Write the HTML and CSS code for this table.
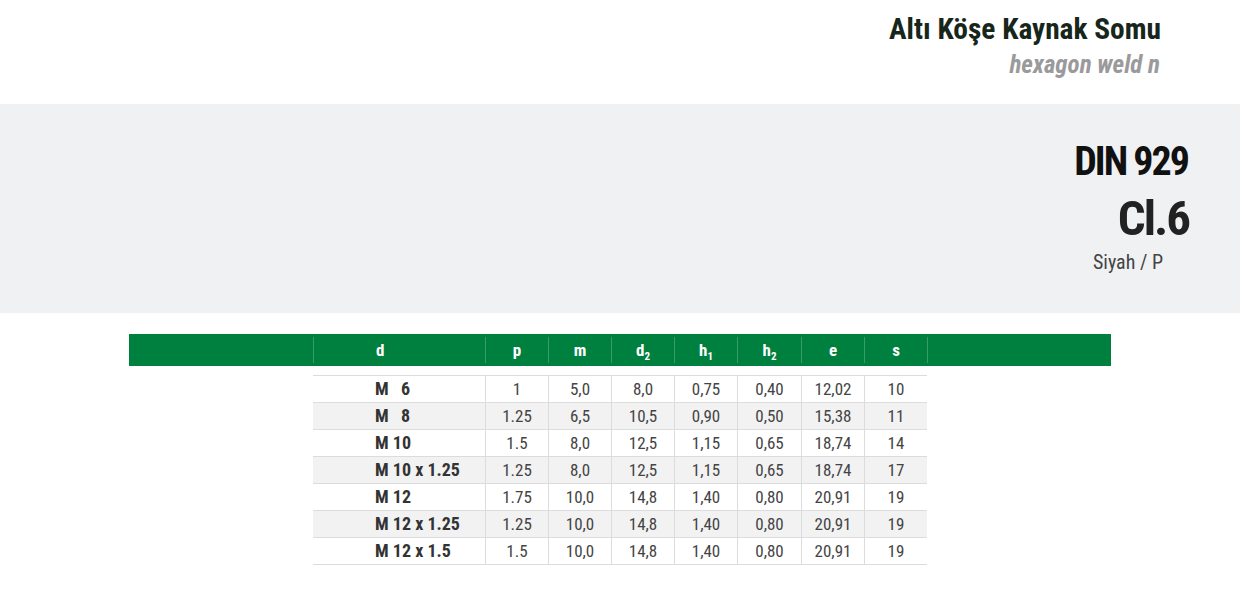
FILE: index.html
```html
<!DOCTYPE html>
<html lang="tr">
<head>
<meta charset="utf-8">
<title>Altı Köşe Kaynak Somu</title>
<link rel="stylesheet" href="styles.css">
</head>
<body>
<header class="top">
  <h1 class="title">Altı Köşe Kaynak Somu</h1>
  <p class="subtitle">hexagon weld n</p>
</header>
<section class="band">
  <div class="din">DIN 929</div>
  <div class="cls">Cl.6</div>
  <div class="finish">Siyah / P</div>
</section>
<section class="wrap">
  <div class="head">
    <div class="hc"></div>
    <div class="hc sep left">d</div>
    <div class="hc sep">p</div>
    <div class="hc sep">m</div>
    <div class="hc sep">d<sub>2</sub></div>
    <div class="hc sep">h<sub>1</sub></div>
    <div class="hc sep">h<sub>2</sub></div>
    <div class="hc sep">e</div>
    <div class="hc sep">s</div>
    <div class="hc sep"></div>
  </div>
  <div class="body">
    <div class="row"><div class="c first">M&nbsp;&nbsp;&nbsp;6</div><div class="c">1</div><div class="c">5,0</div><div class="c">8,0</div><div class="c">0,75</div><div class="c">0,40</div><div class="c">12,02</div><div class="c">10</div></div>
    <div class="row alt"><div class="c first">M&nbsp;&nbsp;&nbsp;8</div><div class="c">1.25</div><div class="c">6,5</div><div class="c">10,5</div><div class="c">0,90</div><div class="c">0,50</div><div class="c">15,38</div><div class="c">11</div></div>
    <div class="row"><div class="c first">M 10</div><div class="c">1.5</div><div class="c">8,0</div><div class="c">12,5</div><div class="c">1,15</div><div class="c">0,65</div><div class="c">18,74</div><div class="c">14</div></div>
    <div class="row alt"><div class="c first">M 10 x 1.25</div><div class="c">1.25</div><div class="c">8,0</div><div class="c">12,5</div><div class="c">1,15</div><div class="c">0,65</div><div class="c">18,74</div><div class="c">17</div></div>
    <div class="row"><div class="c first">M 12</div><div class="c">1.75</div><div class="c">10,0</div><div class="c">14,8</div><div class="c">1,40</div><div class="c">0,80</div><div class="c">20,91</div><div class="c">19</div></div>
    <div class="row alt"><div class="c first">M 12 x 1.25</div><div class="c">1.25</div><div class="c">10,0</div><div class="c">14,8</div><div class="c">1,40</div><div class="c">0,80</div><div class="c">20,91</div><div class="c">19</div></div>
    <div class="row last"><div class="c first">M 12 x 1.5</div><div class="c">1.5</div><div class="c">10,0</div><div class="c">14,8</div><div class="c">1,40</div><div class="c">0,80</div><div class="c">20,91</div><div class="c">19</div></div>
  </div>
</section>
</body>
</html>
```

FILE: styles.css
```css
* { box-sizing: border-box; }
html, body { margin: 0; padding: 0; background: #ffffff; }
body {
  font-family: "Roboto Condensed", "Liberation Sans Narrow", "Arial Narrow", Roboto, "Liberation Sans", sans-serif;
  color: #333;
}
.top {
  height: 104px;
  display: flex;
  flex-direction: column;
  align-items: flex-end;
  padding: 11px 79px 0 0;
}
.title {
  margin: 0;
  font-size: 29.4px;
  line-height: 36px;
  font-weight: 700;
  color: #17261a;
}
.subtitle {
  margin: 4px 1px 0 0;
  font-size: 25px;
  line-height: 28px;
  font-weight: 700;
  font-style: italic;
  color: #9a9a9c;
}
.band {
  height: 209px;
  background: #f0f1f2;
  display: flex;
  flex-direction: column;
  align-items: flex-end;
  padding: 36px 50px 0 0;
}
.din {
  font-size: 40px;
  line-height: 44px;
  font-weight: 700;
  letter-spacing: -2px;
  margin-right: 2px;
  color: #111;
}
.cls {
  margin-top: 9px;
  font-size: 49px;
  line-height: 52px;
  font-weight: 700;
  letter-spacing: -2px;
  margin-right: 1px;
  color: #222;
}
.finish {
  margin: 4px 27px 0 0;
  font-size: 20px;
  line-height: 26px;
  color: #444;
}
.wrap {
  padding: 21px 129px 0 129px;
}
.head {
  display: grid;
  grid-template-columns: 184px 172px 63px 63px 63px 63px 64px 63px 63px 1fr;
  height: 32px;
  background: #00803f;
}
.hc {
  margin: 3px 0;
  color: #fff;
  font-weight: 700;
  font-size: 17px;
  line-height: 26px;
  text-align: center;
}
.hc.sep { border-left: 1px solid #3b9b68; }
.hc.left { text-align: left; padding-left: 62px; }
.hc sub { font-size: 11px; vertical-align: -4px; line-height: 0; }
.body {
  margin: 9px 0 0 184px;
  width: 614px;
}
.row {
  display: grid;
  grid-template-columns: 172px 63px 63px 63px 63px 64px 63px 63px;
  height: 27px;
  border-top: 1px solid #dcdcdc;
}
.row.alt { background: #f2f2f3; }
.row.last { border-bottom: 1px solid #dcdcdc; height: 28px; }
.c {
  font-size: 17px;
  line-height: 26px;
  text-align: center;
  color: #444;
  border-left: 1px solid #dcdcdc;
}
.c.first {
  border-left: none;
  text-align: left;
  padding-left: 62px;
  font-size: 18px;
  font-weight: 700;
  color: #333;
}
```
